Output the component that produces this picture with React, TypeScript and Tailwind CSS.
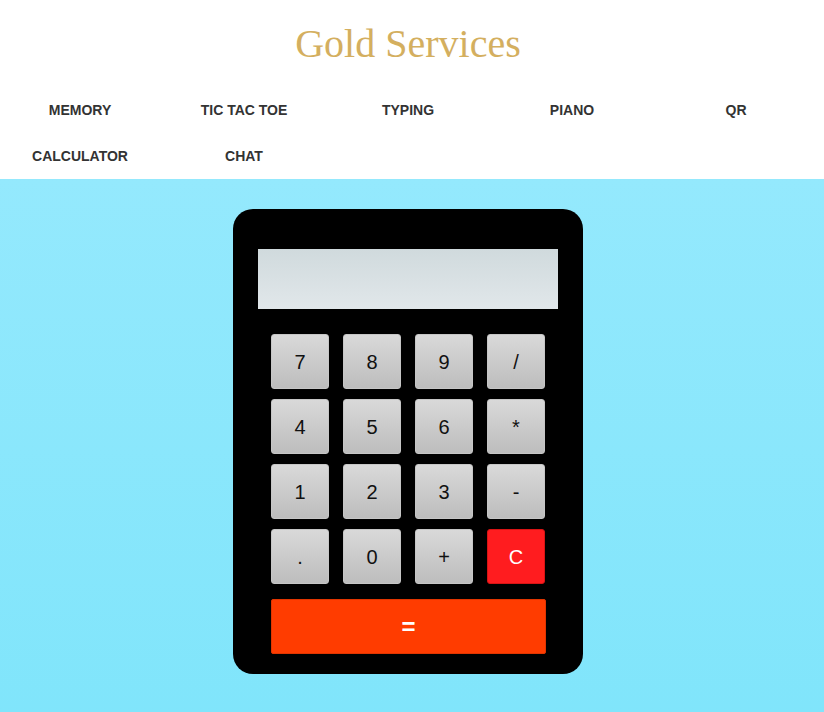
const links = ["MEMORY", "TIC TAC TOE", "TYPING", "PIANO", "QR", "CALCULATOR", "CHAT"];

const keys = ["7", "8", "9", "/", "4", "5", "6", "*", "1", "2", "3", "-", ".", "0", "+", "C"];

const App = () => {
  return (
    <div className="min-h-[712px] flex flex-col font-['Liberation_Sans',Arial,sans-serif]">
      {/* Header */}
      <header className="bg-white">
        <h1 className="h-[87px] pr-[8px] flex items-center justify-center font-['Liberation_Serif',serif] text-[40px] text-[#d4af5f]">
          Gold Services
        </h1>
        <nav className="flex flex-wrap gap-x-[4px]">
          {links.map((link) => (
            <a
              key={link}
              href="#"
              className="w-[160px] h-[46px] flex items-center justify-center text-[14px] font-bold text-[#333]"
            >
              {link}
            </a>
          ))}
        </nav>
      </header>

      {/* Calculator */}
      <main className="flex-1 bg-gradient-to-b from-[#94e9fd] to-[#80e5fb] pt-[30px] pb-[38px]">
        <div className="ml-[233px] w-[350px] bg-black rounded-[20px] pt-[40px] pb-[20px]">
          <div className="mx-[25px] h-[60px] bg-gradient-to-b from-[#d0dadd] to-[#e1e7ea]"></div>
          <div className="mx-[38px] mt-[25px] grid grid-cols-[repeat(4,58px)] gap-x-[14px] gap-y-[10px]">
            {keys.map((k) => (
              <button
                key={k}
                className={
                  k === "C"
                    ? "h-[55px] rounded-[3px] bg-[#ff1c1f] border border-[#d81414] text-white text-[20px]"
                    : "h-[55px] rounded-[3px] bg-gradient-to-b from-[#d9d9d9] to-[#bdbdbd] border border-[#c6c6c6] text-[#111] text-[20px]"
                }
              >
                {k}
              </button>
            ))}
          </div>
          <div className="mx-[38px] mt-[15px]">
            <button className="w-[275px] h-[55px] rounded-[2px] bg-[#ff3c00] border border-[#e03500] text-white text-[24px] font-bold">
              =
            </button>
          </div>
        </div>
      </main>
    </div>
  );
};

export default App;
